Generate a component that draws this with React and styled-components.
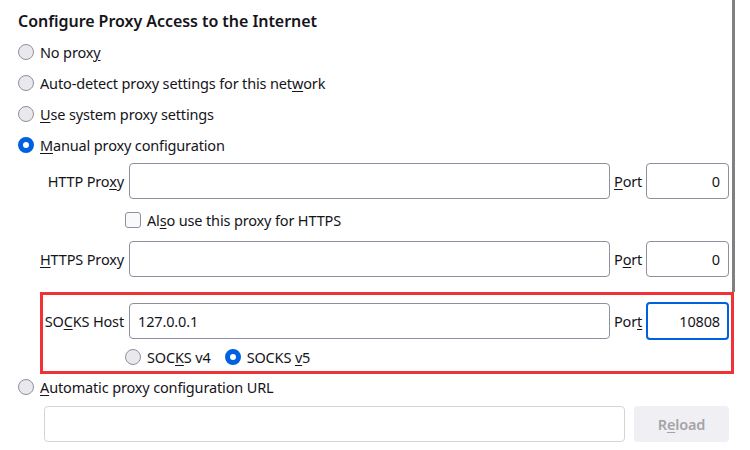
import React from "react";
import styled, { createGlobalStyle } from "styled-components";

const Global = createGlobalStyle`
  html, body { margin: 0; padding: 0; background: #ffffff; }
  body {
    font-family: "Noto Sans", "Open Sans", "DejaVu Sans", sans-serif;
    color: #15141a;
    font-size: 14.5px;
    letter-spacing: -0.15px;
  }
`;

const Page = styled.div`
  position: relative;
  width: 750px;
  height: 450px;
  overflow: hidden;
  box-sizing: border-box;
  padding: 8px 0 0 18px;
  display: flex;
  flex-direction: column;
`;

const Thumb = styled.div`
  position: absolute;
  right: 15px;
  top: 0;
  width: 3px;
  height: 292px;
  background: #808080;
`;

const Title = styled.h2`
  margin: 0;
  height: 28px;
  line-height: 26px;
  font-size: 16px;
  letter-spacing: -0.05px;
  font-weight: 600;
`;

const RadioRow = styled.label`
  display: flex;
  align-items: center;
  gap: 6px;
  height: ${(p) => p.$h || 31}px;
  white-space: nowrap;
`;

const Radio = styled.span`
  box-sizing: border-box;
  flex: none;
  width: 16px;
  height: 16px;
  border-radius: 50%;
  border: ${(p) => (p.$checked ? "5px solid #0061e0" : "1px solid #8f8f9d")};
  background: ${(p) => (p.$checked ? "#ffffff" : "#e9e9ed")};
`;

const Check = styled.span`
  box-sizing: border-box;
  flex: none;
  width: 16px;
  height: 16px;
  border-radius: 3px;
  border: 1px solid #8f8f9d;
  background: #f9f9fb;
`;

const Key = styled.u`
  text-decoration: underline;
  text-underline-offset: 2px;
  text-decoration-thickness: 1px;
`;

const Grid = styled.div`
  display: grid;
  grid-template-columns: ${(p) => p.$label}px 481px 28px 83px;
  column-gap: 4px;
  align-items: center;
`;

const Manual = styled(Grid)`
  margin-top: 3px;
`;

const FieldLabel = styled.span`
  text-align: right;
  white-space: nowrap;
  padding-right: 1px;
`;

const PortLabel = styled.span`
  white-space: nowrap;
  text-align: left;
`;

const Input = styled.div`
  box-sizing: border-box;
  height: ${(p) => (p.$focus ? 38 : 36)}px;
  border: ${(p) =>
    p.$focus ? "2px solid #0061e0" : p.$disabled ? "1px solid #d4d4d8" : "1px solid #8f8f9d"};
  border-radius: 4px;
  background: #ffffff;
  display: flex;
  align-items: center;
  justify-content: ${(p) => (p.$right ? "flex-end" : "flex-start")};
  padding: 0 ${(p) => (p.$focus ? 7 : 8)}px;
  white-space: nowrap;
`;

const SubRow = styled.div`
  grid-column: 2 / -1;
  margin-left: -4px;
  display: flex;
  align-items: center;
  gap: 14px;
  height: ${(p) => p.$h}px;
`;

const Inline = styled.label`
  display: flex;
  align-items: center;
  gap: 6px;
  white-space: nowrap;
`;

const Spacer = styled.div`
  grid-column: 1 / -1;
  height: ${(p) => p.$h}px;
`;

const SocksBox = styled(Grid)`
  grid-column: 1 / -1;
  margin: 0 -5px 0 22px;
  border: 3px solid #f03237;
  padding: 7px 2px 0 0;
  height: 82px;
  box-sizing: border-box;
  align-content: start;
`;

const UrlRow = styled.div`
  display: flex;
  align-items: center;
  gap: 9px;
  margin-top: 6px;
  padding-left: 26px;
`;

const UrlInput = styled(Input)`
  width: 581px;
`;

const Button = styled.div`
  box-sizing: border-box;
  width: 95px;
  height: 36px;
  border-radius: 4px;
  background: #f0f0f4;
  color: #a4a4a8;
  font-weight: 600;
  display: flex;
  align-items: center;
  justify-content: center;
`;

export default function App() {
  return (
    <>
      <Global />
      <Page>
        <Thumb />
        <Title>Configure Proxy Access to the Internet</Title>
        <RadioRow>
          <Radio />
          <span>No prox<Key>y</Key></span>
        </RadioRow>
        <RadioRow>
          <Radio />
          <span>Auto-detect proxy settings for this net<Key>w</Key>ork</span>
        </RadioRow>
        <RadioRow>
          <Radio />
          <span><Key>U</Key>se system proxy settings</span>
        </RadioRow>
        <RadioRow>
          <Radio $checked />
          <span><Key>M</Key>anual proxy configuration</span>
        </RadioRow>

        <Manual $label={107}>
          <FieldLabel>HTTP Pro<Key>x</Key>y</FieldLabel>
          <Input />
          <PortLabel><Key>P</Key>ort</PortLabel>
          <Input $right>0</Input>

          <SubRow $h={42}>
            <Inline>
              <Check />
              <span>Al<Key>s</Key>o use this proxy for HTTPS</span>
            </Inline>
          </SubRow>

          <FieldLabel><Key>H</Key>TTPS Proxy</FieldLabel>
          <Input />
          <PortLabel>P<Key>o</Key>rt</PortLabel>
          <Input $right>0</Input>

          <Spacer $h={15} />

          <SocksBox $label={82}>
            <FieldLabel>SO<Key>C</Key>KS Host</FieldLabel>
            <Input>127.0.0.1</Input>
            <PortLabel>Por<Key>t</Key></PortLabel>
            <Input $right $focus>10808</Input>
            <SubRow $h={34}>
              <Inline>
                <Radio />
                <span>SOC<Key>K</Key>S v4</span>
              </Inline>
              <Inline>
                <Radio $checked />
                <span>SOCKS <Key>v</Key>5</span>
              </Inline>
            </SubRow>
          </SocksBox>
        </Manual>

        <RadioRow $h={26}>
          <Radio />
          <span><Key>A</Key>utomatic proxy configuration URL</span>
        </RadioRow>
        <UrlRow>
          <UrlInput $disabled />
          <Button>R<Key>e</Key>load</Button>
        </UrlRow>
      </Page>
    </>
  );
}
